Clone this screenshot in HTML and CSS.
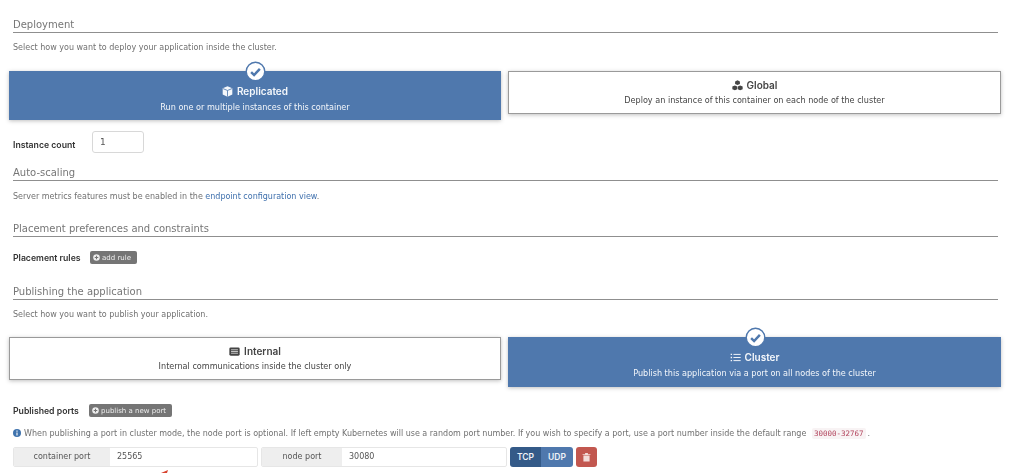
FILE: index.html
```html
<!DOCTYPE html>
<html lang="en">
<head>
<meta charset="utf-8">
<title>Deployment</title>
<link rel="stylesheet" href="styles.css">
</head>
<body>
<main class="page">
  <section class="sec sec-deploy">
    <h2 class="title">Deployment</h2>
    <p class="note note-deploy">Select how you want to deploy your application inside the cluster.</p>
    <div class="cards cards-deploy">
      <div class="card card-on card-on-a">
        <span class="tick"><svg viewBox="0 0 24 24" width="24" height="24"><circle cx="12" cy="12" r="10.6" fill="#fff" stroke="#4f78ad" stroke-width="1.6"/><path d="M7 12.6l3.4 3.4L17 9" fill="none" stroke="#4f78ad" stroke-width="2.8"/></svg></span>
        <div class="card-name"><svg class="ico" viewBox="0 0 16 16"><path d="M8 .5l7 2.800v9L8 15.500l-7-3.200v-9z" fill="currentColor"/><path d="M1.500 3.800L8 6.500l6.500-2.700M8 6.500v9" fill="none" stroke="#4f78ad" stroke-width="1.200"/></svg>Replicated</div>
        <div class="card-sub">Run one or multiple instances of this container</div>
      </div>
      <div class="card card-off">
        <div class="card-name"><svg class="ico" viewBox="0 0 16 16"><path d="M8 .5l3.500 1.500v3.800L8 7.400 4.500 5.800V2zM4.200 8l3.400 1.500v3.900L4.200 15 .5 13.400V9.500zM11.800 8l3.700 1.500v3.900L11.800 15l-3.400-1.600V9.500z" fill="currentColor"/></svg>Global</div>
        <div class="card-sub">Deploy an instance of this container on each node of the cluster</div>
      </div>
    </div>
    <div class="field field-count">
      <label class="lbl lbl-count">Instance count</label>
      <span class="count">1</span>
    </div>
  </section>

  <section class="sec sec-auto">
    <h2 class="title">Auto-scaling</h2>
    <p class="note">Server metrics features must be enabled in the <a class="link" href="#">endpoint configuration view</a>.</p>
  </section>

  <section class="sec sec-place">
    <h2 class="title">Placement preferences and constraints</h2>
    <div class="field field-rules">
      <label class="lbl lbl-rules">Placement rules</label>
      <span class="pill pill-rule"><svg class="pill-ico" viewBox="0 0 16 16"><circle cx="8" cy="8" r="7.5" fill="currentColor"/><path d="M8 4v8M4 8h8" stroke="#757575" stroke-width="2.4"/></svg>add rule</span>
    </div>
  </section>

  <section class="sec sec-pub">
    <h2 class="title">Publishing the application</h2>
    <p class="note note-pub">Select how you want to publish your application.</p>
    <div class="cards cards-pub">
      <div class="card card-off card-pub-off">
        <div class="card-name"><svg class="ico" viewBox="0 0 16 16"><rect x="0.5" y="2" width="15" height="12" rx="2" fill="currentColor"/><path d="M3 5.500h10M3 8h10M3 10.500h10" stroke="#fff" stroke-width="1"/></svg>Internal</div>
        <div class="card-sub">Internal communications inside the cluster only</div>
      </div>
      <div class="card card-on card-on-b">
        <span class="tick"><svg viewBox="0 0 24 24" width="24" height="24"><circle cx="12" cy="12" r="10.6" fill="#fff" stroke="#4f78ad" stroke-width="1.6"/><path d="M7 12.6l3.4 3.4L17 9" fill="none" stroke="#4f78ad" stroke-width="2.8"/></svg></span>
        <div class="card-name"><svg class="ico" viewBox="0 0 16 16"><path d="M5 3.500h10.500M5 8h10.500M5 12.500h10.500" stroke="currentColor" stroke-width="1.400"/><path d="M1 3.500h2M1 8h2M1 12.500h2" stroke="currentColor" stroke-width="2"/></svg>Cluster</div>
        <div class="card-sub">Publish this application via a port on all nodes of the cluster</div>
      </div>
    </div>
    <div class="field field-ports">
      <label class="lbl lbl-ports">Published ports</label>
      <span class="pill pill-port"><svg class="pill-ico" viewBox="0 0 16 16"><circle cx="8" cy="8" r="7.5" fill="currentColor"/><path d="M8 4v8M4 8h8" stroke="#757575" stroke-width="2.4"/></svg>publish a new port</span>
    </div>
    <p class="note note-info"><svg class="info" viewBox="0 0 16 16"><circle cx="8" cy="8" r="8" fill="#3f73ad"/><path d="M8 3.200v2.200M8 7v6" stroke="#fff" stroke-width="2.200"/></svg>When publishing a port in cluster mode, the node port is optional. If left empty Kubernetes will use a random port number. If you wish to specify a port, use a port number inside the default range <code class="range">30000-32767</code>.</p>
    <div class="port-row">
      <div class="group group-a"><span class="addon addon-a">container port</span><span class="val">25565</span></div>
      <div class="group group-b"><span class="addon addon-b">node port</span><span class="val">30080</span></div>
      <div class="proto"><span class="proto-btn proto-on">TCP</span><span class="proto-btn">UDP</span></div>
      <span class="del"><svg viewBox="0 0 16 16" width="9" height="10"><path d="M1 3h14v1.500H1zM5.500 1h5v2h-5zM2.500 5.500h11V16h-11z" fill="#f3dcd9"/></svg></span>
    </div>
  </section>
  <svg class="arrow" viewBox="0 0 8 3" width="8" height="3"><path d="M0 3L7 0l-1 3z" fill="#d8432e"/></svg>
</main>
</body>
</html>
```
FILE: styles.css
```css
* { box-sizing: border-box; }
html, body { margin: 0; padding: 0; background: #fff; }
body {
  font-family: "DejaVu Sans", sans-serif;
  color: #333;
  height: 473px;
  overflow: hidden;
}
.page {
  padding: 18px 26px 0 13px;
  filter: blur(0.35px);
  position: relative;
  height: 473px;
}
.title {
  margin: 0;
  font-size: 10px;
  line-height: 13px;
  font-weight: 400;
  color: #767676;
  padding-bottom: 1px;
  border-bottom: 1px solid #8f8f8f;
  height: 15px;
}
.note {
  margin: 0;
  font-size: 8px;
  line-height: 11px;
  color: #707070;
}
.note-deploy { margin-top: 9px; }
.link { color: #3f70ad; text-decoration: none; }
.cards {
  display: grid;
  grid-template-columns: 492px 493px;
  gap: 7px;
  margin-left: -4px;
  margin-right: -3px;
  align-items: start;
}
.cards-deploy { margin-top: 18px; }
.card {
  position: relative;
  text-align: center;
  box-shadow: 0 1px 4px rgba(0, 0, 0, .25);
}
.card-off {
  height: 43px;
  background: #fff;
  border: 1px solid #9a9a9a;
  color: #444;
  padding-top: 7px;
}
.card-on {
  background: #4f78ad;
  color: #f4f7fb;
  height: 49px;
  padding-top: 14px;
}
.card-on-b { height: 50px; }
.card-name {
  display: flex;
  justify-content: center;
  align-items: center;
  font-family: Inter, "DejaVu Sans", sans-serif;
  font-size: 10px;
  line-height: 12px;
  font-weight: 600;
}
.ico { width: 11px; height: 11px; margin-right: 4px; flex: none; }
.card-sub {
  font-size: 8.100px;
  line-height: 11px;
  margin-top: 5px;
}
.card-off .card-sub { margin-top: 4px; }
.tick {
  position: absolute;
  top: -10.500px;
  left: 50%;
  margin-left: -10px;
  width: 21px;
  height: 21px;
}
.tick svg { width: 21px; height: 21px; display: block; }
.field { display: flex; align-items: center; }
.field-count { margin-top: 11px; height: 22px; }
.lbl {
  font-family: Inter, "DejaVu Sans", sans-serif;
  font-size: 8.700px;
  font-weight: 600;
  color: #333;
}
.lbl-count { width: 79px; padding-top: 5px; }
.count {
  width: 52px;
  height: 22px;
  border: 1px solid #d8d8d8;
  border-radius: 3px;
  font-size: 9px;
  line-height: 20px;
  padding-left: 7px;
  color: #555;
}
.sec-auto { margin-top: 13px; }
.sec-auto .note { margin-top: 10px; }
.sec-place { margin-top: 20px; }
.field-rules { margin-top: 14px; height: 13px; }
.lbl-rules { width: 77px; }
.pill {
  display: inline-flex;
  align-items: center;
  height: 13px;
  background: #757575;
  color: #eee;
  border-radius: 2px;
  font-size: 7px;
  padding: 0 3px;
}
.pill-rule { width: 47px; }
.pill-port { width: 83px; }
.pill-ico { width: 7px; height: 7px; margin-right: 2px; flex: none; }
.sec-pub { margin-top: 21px; }
.note-pub { margin-top: 9px; }
.cards-pub { margin-top: 17px; }
.field-ports { margin-top: 17px; height: 13px; }
.lbl-ports { width: 76px; }
.note-info {
  margin-top: 11px;
  display: block;
  white-space: nowrap;
}
.info { width: 8px; height: 8px; margin-right: 3px; vertical-align: -1px; }
.range {
  font-family: "DejaVu Sans Mono", monospace;
  font-size: 7.500px;
  color: #b2435c;
  background: #f8f3f4;
  padding: 1px 2px;
  margin: 0 2px 0 3px;
  border-radius: 2px;
}
.port-row {
  display: flex;
  margin-top: 8px;
  height: 20px;
  font-size: 8px;
  color: #555;
}
.group {
  display: flex;
  height: 20px;
  border: 1px solid #e6e6e6;
  border-radius: 2px;
  overflow: hidden;
}
.group-a { width: 245px; }
.group-b { width: 246px; margin-left: 3px; }
.addon {
  background: #eee;
  text-align: center;
  line-height: 18px;
  flex: none;
}
.addon-a { width: 96px; }
.addon-b { width: 80px; }
.val { padding-left: 7px; line-height: 18px; }
.proto {
  display: flex;
  margin-left: 3px;
  border-radius: 3px;
  overflow: hidden;
}
.proto-btn {
  width: 32px;
  background: #4f78ad;
  color: #eef2f7;
  font-family: Inter, "DejaVu Sans", sans-serif;
  font-weight: 600;
  text-align: center;
  line-height: 20px;
  font-size: 8.500px;
}
.proto-on { width: 31px; background: #345a88; }
.del {
  display: flex;
  align-items: center;
  justify-content: center;
  width: 21px;
  margin-left: 3px;
  background: #c2574f;
  border-radius: 3px;
}
.arrow { position: absolute; left: 161px; top: 470px; }
```
